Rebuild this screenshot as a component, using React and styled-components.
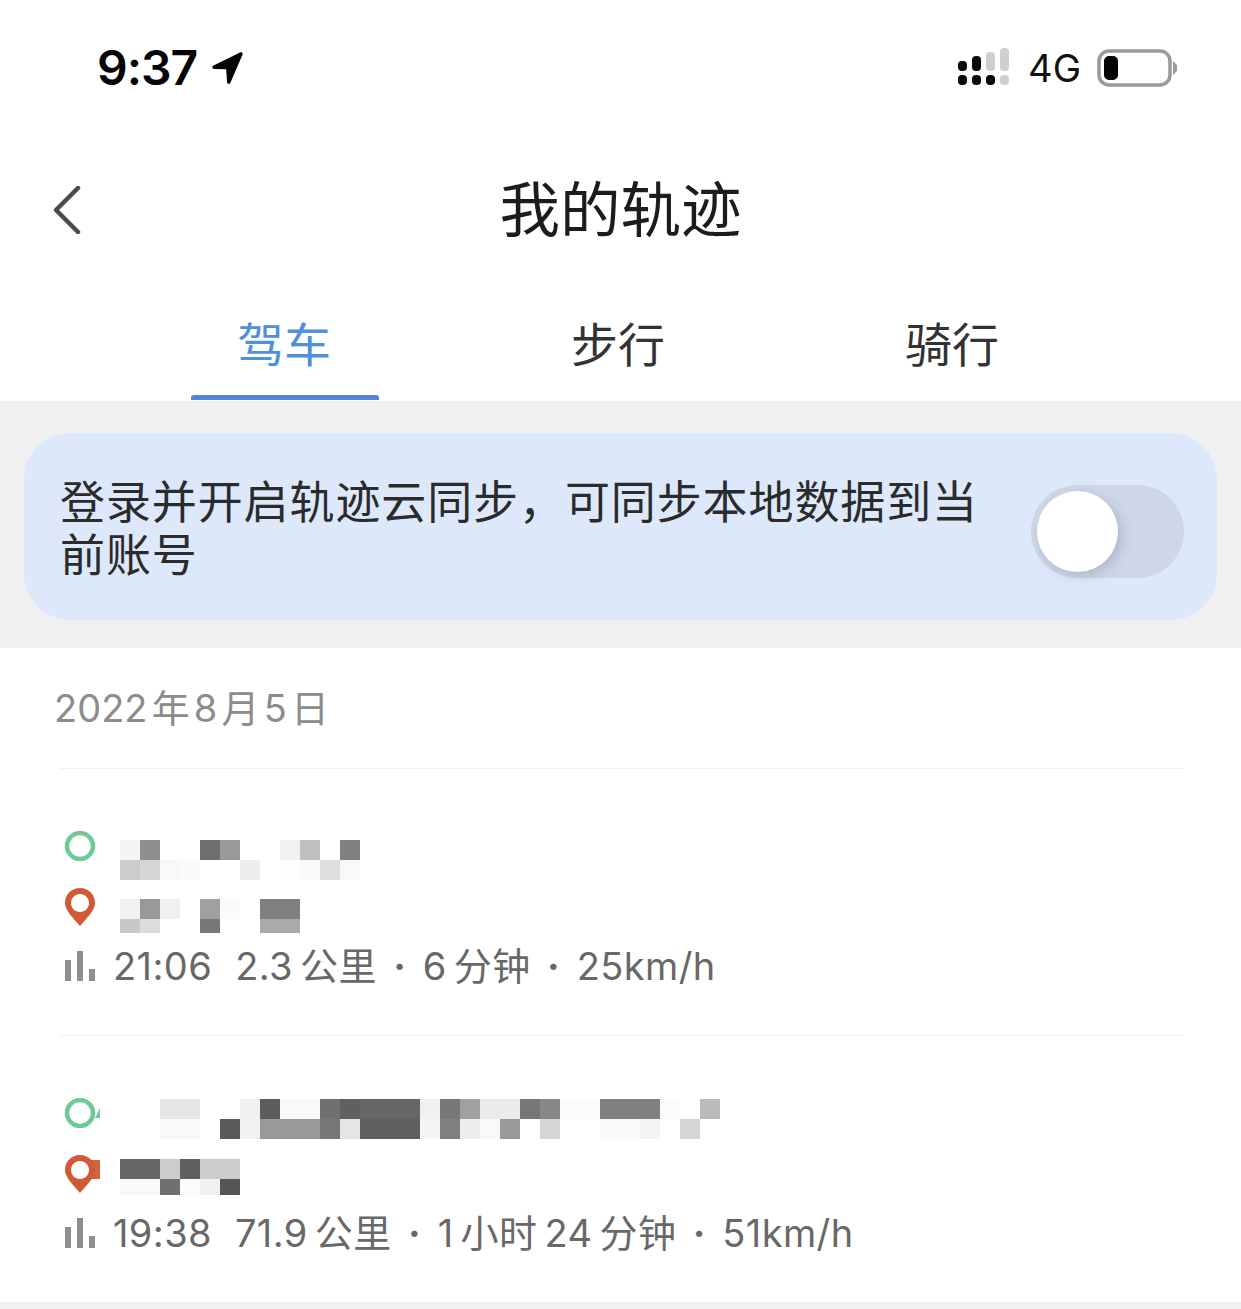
import React from "react"
import styled, { createGlobalStyle } from "styled-components"

const GlobalStyle = createGlobalStyle`
  html, body {
    margin: 0;
    padding: 0;
    background: #fff;
    font-family: Inter, "Noto Sans CJK SC", sans-serif;
  }
`

const _ = "fff"

const trips = [
  {
    time: "21:06",
    facts: ["2.3 公里", "6 分钟", "25km/h"],
    top: 62,
    gapAfterTime: 23,
    startSliver: false,
    placesTop: 9,
    placesGap: 19,
    start: {
      height: [20, 20],
      rows: [
        ["f5f5f5", "8f8f8f", _, _, "6f6f6f", "999", _, _, "f2f2f2", "bfbfbf", _, "808080"],
        ["cbcbcb", "d5d5d5", "f8f8f8", "fafafa", _, _, "eee", _, "fdfdfd", "fafafa", "dedede", "f8f8f8"],
      ],
    },
    end: {
      height: [20, 14],
      rows: [
        ["f2f2f2", "999", "f0f0f0", _, "a0a0a0", "fafafa", _, "7f7f7f", "7f7f7f"],
        ["c8c8c8", "dcdcdc", _, _, "777", _, _, "aaa", "aaa"],
      ],
    },
  },
  {
    time: "19:38",
    facts: ["71.9 公里", "1 小时 24 分钟", "51km/h"],
    top: 62,
    gapAfterTime: 23,
    startSliver: true,
    placesTop: 1,
    placesGap: 20,
    start: {
      height: [20, 20],
      rows: [
        [_, _, "e5e5e5", "e5e5e5", _, _, "f0f0f0", "5c5c5c", "f8f8f8", "f8f8f8", "707070", "606060", "666", "666", "666", "f0f0f0", "777", "a0a0a0", "ebebeb", "ebebeb", "777", "888", "fcfcfc", "fcfcfc", "808080", "808080", "808080", "fbfbfb", _, "bbb"],
        [_, _, "f8f8f8", "f8f8f8", _, "5a5a5a", "f2f2f2", "999", "999", "999", "777", "e5e5e5", "5f5f5f", "5f5f5f", "5f5f5f", "f5f5f5", "7f7f7f", "eee", "f8f8f8", "999", _, "d5d5d5", _, _, "fafafa", "fafafa", "f3f3f3", _, "d5d5d5", _],
      ],
    },
    end: {
      height: [20, 16],
      rows: [
        ["666", "666", "ccc", "5f5f5f", "ccc", "ccc"],
        ["f8f8f8", "f8f8f8", "6f6f6f", "fcfcfc", "f0f0f0", "555"],
      ],
    },
  },
]

const Signal = () => (
  <svg width="52" height="40" viewBox="0 0 52 40">
    <rect x="1" y="13" width="9" height="10" rx="4" fill="#0a0a0a" />
    <rect x="15" y="8" width="9" height="15" rx="4" fill="#0a0a0a" />
    <rect x="29" y="4" width="9" height="19" rx="4" fill="#cfcfcf" />
    <rect x="43" y="0" width="9" height="23" rx="4" fill="#cfcfcf" />
    <rect x="1" y="27" width="9" height="10" rx="4" fill="#0a0a0a" />
    <rect x="15" y="27" width="9" height="10" rx="4" fill="#0a0a0a" />
    <rect x="29" y="27" width="9" height="10" rx="4" fill="#0a0a0a" />
    <rect x="43" y="27" width="9" height="10" rx="4" fill="#cfcfcf" />
  </svg>
)

const Battery = () => (
  <svg width="80" height="38" viewBox="0 0 80 38">
    <rect x="2" y="2" width="71" height="34" rx="10" fill="none" stroke="#9a9a9a" strokeWidth="3.5" />
    <rect x="7" y="7" width="14" height="24" rx="5" fill="#050505" />
    <path d="M76 12 L80 16 V22 L76 26 Z" fill="#9a9a9a" />
  </svg>
)

const LocationArrow = () => (
  <svg width="32" height="34" viewBox="0 0 32 34">
    <path
      d="M29 1.5 L2.5 14.5 C0.5 15.6 1.2 18 3.2 18 L15.2 18.2 L16 31 C16.2 33.3 18.6 33.6 19.5 31.6 L31.4 4 C32.2 2 31 0.6 29 1.5 Z"
      fill="#050505"
    />
  </svg>
)

const BackIcon = () => (
  <svg width="28" height="48" viewBox="0 0 28 48">
    <path d="M25 2 L3 24 L25 46" fill="none" stroke="#4a4a4a" strokeWidth="4.5" strokeLinecap="round" strokeLinejoin="round" />
  </svg>
)

const StartIcon = ({ sliver }) => (
  <svg width="36" height="30" viewBox="0 0 36 30">
    <circle cx="16" cy="15" r="13" fill="none" stroke="#6fca96" strokeWidth="4.5" />
    {sliver && <path d="M31 20 L36 10 V20 Z" fill="#6fca96" />}
  </svg>
)

const EndIcon = ({ sliver }) => (
  <svg width="36" height="38" viewBox="0 0 36 38">
    {sliver && <rect x="25" y="5" width="11" height="19" fill="#d0643f" />}
    <path
      fillRule="evenodd"
      d="M16 0 C7.5 0 1 6.5 1 15 C1 22 9 30 16 38 C23 30 31 22 31 15 C31 6.5 24.5 0 16 0 Z M16 6 C21 6 25 10 25 15 C25 20 21 24 16 24 C11 24 7 20 7 15 C7 10 11 6 16 6 Z"
      fill="#d2583a"
    />
  </svg>
)

const BarsIcon = () => (
  <svg width="32" height="30" viewBox="0 0 32 30">
    <rect x="1" y="9" width="6" height="21" fill="#8f8f8f" />
    <rect x="13" y="0" width="6" height="30" fill="#8f8f8f" />
    <rect x="25" y="18" width="6" height="12" fill="#8f8f8f" />
  </svg>
)

const Mosaic = ({ rows, height }) => (
  <MosaicGrid>
    {rows.map((row, r) => (
      <MosaicRow key={r} $height={height[r]}>
        {row.map((shade, c) => (
          <MosaicCell key={c} $shade={shade} />
        ))}
      </MosaicRow>
    ))}
  </MosaicGrid>
)

const Trip = ({ trip }) => (
  <TripRow $top={trip.top}>
    <Route>
      <RouteIcons>
        <StartIcon sliver={trip.startSliver} />
        <EndIcon sliver={trip.startSliver} />
      </RouteIcons>
      <Places $top={trip.placesTop} $gap={trip.placesGap}>
        <Mosaic {...trip.start} />
        <Mosaic {...trip.end} />
      </Places>
    </Route>
    <Stats>
      <StatsIcon>
        <BarsIcon />
      </StatsIcon>
      <Time $gap={trip.gapAfterTime}>{trip.time}</Time>
      {trip.facts.map((fact, i) => (
        <React.Fragment key={fact}>
          {i > 0 && <Dot>·</Dot>}
          <span>{fact}</span>
        </React.Fragment>
      ))}
    </Stats>
  </TripRow>
)

const App = () => (
  <Page>
    <GlobalStyle />
    <StatusBar>
      <Clock>
        9:37
        <LocationArrow />
      </Clock>
      <StatusRight>
        <Signal />
        <Network>4G</Network>
        <Battery />
      </StatusRight>
    </StatusBar>

    <NavBar>
      <BackButton>
        <BackIcon />
      </BackButton>
      <Title>我的轨迹</Title>
    </NavBar>

    <Tabs>
      <Tab $active>驾车</Tab>
      <Tab>步行</Tab>
      <Tab>骑行</Tab>
    </Tabs>

    <SyncBand>
      <SyncCard>
        <SyncText>登录并开启轨迹云同步，可同步本地数据到当前账号</SyncText>
        <Toggle>
          <Knob />
        </Toggle>
      </SyncCard>
    </SyncBand>

    <DateHeading>2022 年 8 月 5 日</DateHeading>
    {trips.map(trip => (
      <Trip key={trip.time} trip={trip} />
    ))}
    <FooterBand />
  </Page>
)

const Page = styled.div`
  width: 1241px;
  height: 1309px;
  overflow: hidden;
  background: #fff;
  display: flex;
  flex-direction: column;
`

const StatusBar = styled.div`
  height: 135px;
  flex: none;
  display: flex;
  align-items: center;
  justify-content: space-between;
  padding: 0 64px 0 97px;
`

const Clock = styled.div`
  display: flex;
  align-items: center;
  gap: 14px;
  font-size: 48px;
  font-weight: 600;
  letter-spacing: -1px;
  color: #050505;
`

const StatusRight = styled.div`
  display: flex;
  align-items: center;
`

const Network = styled.span`
  font-size: 38px;
  font-weight: 400;
  color: #111;
  margin: 0 16px 0 19px;
`

const NavBar = styled.div`
  height: 150px;
  flex: none;
  display: flex;
  align-items: center;
  justify-content: center;
  position: relative;
`

const BackButton = styled.div`
  position: absolute;
  left: 53px;
  top: 51px;
  display: flex;
`

const Title = styled.h1`
  margin: 0;
  font-size: 60.5px;
  font-weight: 400;
  line-height: 72px;
  color: #1c1c1c;
`

const Tabs = styled.div`
  height: 116px;
  flex: none;
  display: grid;
  grid-template-columns: repeat(3, 334px);
  padding-left: 117px;
`

const Tab = styled.div`
  position: relative;
  text-align: center;
  padding-top: 30px;
  font-size: 47px;
  line-height: 60px;
  color: ${props => (props.$active ? "#4f90dc" : "#333")};

  ${props =>
    props.$active &&
    `&::after {
      content: "";
      position: absolute;
      left: 74px;
      bottom: 1px;
      width: 188px;
      height: 5px;
      border-radius: 3px 3px 0 0;
      background: #5484e0;
    }`};
`

const SyncBand = styled.div`
  height: 247px;
  flex: none;
  box-sizing: border-box;
  padding: 32px 24px 28px;
  background: #f0f0f0;
`

const SyncCard = styled.div`
  height: 187px;
  box-sizing: border-box;
  display: flex;
  align-items: center;
  justify-content: space-between;
  padding: 0 33px 0 36px;
  border-radius: 46px;
  background: #dde9fb;
`

const SyncText = styled.div`
  width: 930px;
  padding-top: 4px;
  font-size: 45px;
  line-height: 53px;
  letter-spacing: 0.9px;
  color: #2b2b2b;
`

const Toggle = styled.div`
  width: 153px;
  height: 93px;
  box-sizing: border-box;
  padding: 6px;
  margin-top: 10px;
  border-radius: 47px;
  background: #cdd7e8;
`

const Knob = styled.div`
  width: 81px;
  height: 81px;
  border-radius: 50%;
  background: #fff;
  box-shadow: 4px 4px 12px rgba(120, 130, 150, 0.35);
`

const DateHeading = styled.div`
  height: 120px;
  flex: none;
  box-sizing: border-box;
  padding: 35px 0 0 54px;
  font-size: 38px;
  line-height: 50px;
  word-spacing: -6.5px;
  color: #8c8c8c;
`

const TripRow = styled.div`
  flex: none;
  margin: 0 57px 0 60px;
  padding: ${props => props.$top}px 0 44px;
  border-top: 1px solid #f1f1f1;
`

const Route = styled.div`
  display: flex;
  height: 95px;
  margin-bottom: 15px;
`

const RouteIcons = styled.div`
  width: 60px;
  flex: none;
  box-sizing: border-box;
  padding-left: 4px;
  display: flex;
  flex-direction: column;
  gap: 27px;

  svg {
    display: block;
  }
`

const Places = styled.div`
  display: flex;
  flex-direction: column;
  padding-top: ${props => props.$top}px;
  gap: ${props => props.$gap}px;
`

const MosaicGrid = styled.div`
  display: flex;
  flex-direction: column;
`

const MosaicRow = styled.div`
  display: flex;
  height: ${props => props.$height}px;
`

const MosaicCell = styled.div`
  width: 20px;
  background: #${props => props.$shade};
`

const Stats = styled.div`
  display: flex;
  align-items: baseline;
  height: 50px;
  font-size: 38px;
  line-height: 50px;
  letter-spacing: 0.4px;
  word-spacing: -4px;
  color: #686868;
  white-space: pre;
`

const StatsIcon = styled.div`
  width: 53px;
  flex: none;
  box-sizing: border-box;
  padding-left: 4px;
  display: flex;
  align-self: center;
`

const Time = styled.span`
  margin-right: ${props => props.$gap}px;
`

const Dot = styled.span`
  width: 46px;
  text-align: center;
  font-weight: 700;
`

const FooterBand = styled.div`
  margin-top: auto;
  height: 7px;
  flex: none;
  background: #f1f1f1;
`

export default App
